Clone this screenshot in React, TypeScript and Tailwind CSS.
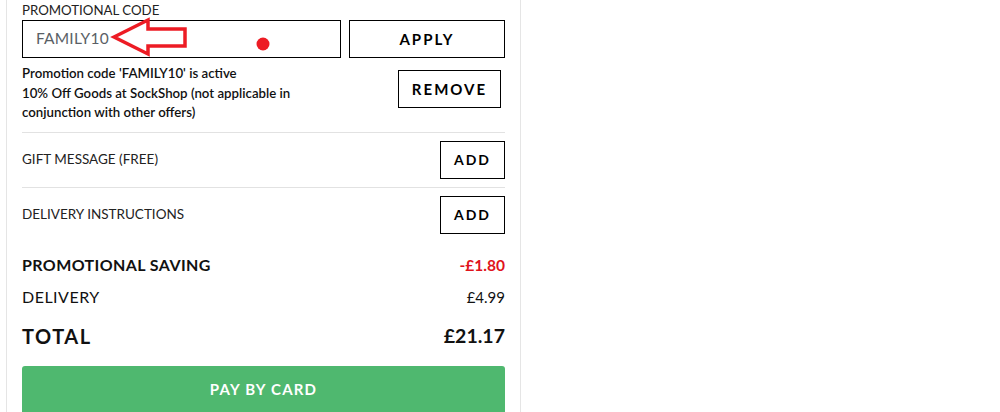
import React from "react";

const font = { fontFamily: "Lato, 'Open Sans', sans-serif" };

function OutlineButton({ label, className = "" }: { label: string; className?: string }) {
    return (
        <button
            className={`flex h-[38px] items-center justify-center border border-black bg-white text-[15px] font-bold tracking-[2px] text-black ${className}`}
        >
            {label}
        </button>
    );
}

export default function App() {
    return (
        <main className="relative h-[412px] w-[1000px] overflow-hidden bg-white text-[#111]" style={font}>
            <section className="ml-[6px] h-full w-[515px] border-x border-[#e5e5e5] px-[15px]">
                {/* promo code */}
                <div className="text-[13.25px] leading-[20px] text-[#222]">PROMOTIONAL CODE</div>
                <div className="flex h-[38px] gap-[8px]">
                    <div className="flex w-[319px] items-center border border-black pl-[13px] text-[15.5px] tracking-[0.2px] text-[#5a5f66]">
                        FAMILY10
                    </div>
                    <OutlineButton label="APPLY" className="flex-1" />
                </div>

                <div className="flex items-start justify-between pt-[6px]">
                    <p className="text-[13.25px] font-semibold leading-[19.5px] text-[#111]">
                        Promotion code 'FAMILY10' is active
                        <br />
                        10% Off Goods at SockShop (not applicable in
                        <br />
                        conjunction with other offers)
                    </p>
                    <OutlineButton label="REMOVE" className="mr-[4px] mt-[6px] w-[103px]" />
                </div>

                <div className="mt-[9px] border-t border-[#e2e2e2]" />
                <div className="flex items-center justify-between py-[8px]">
                    <span className="text-[13.5px] text-[#222]">GIFT MESSAGE (FREE)</span>
                    <OutlineButton label="ADD" className="w-[65px] !text-[14px]" />
                </div>
                <div className="border-t border-[#e2e2e2]" />
                <div className="flex items-center justify-between py-[8px]">
                    <span className="text-[13.5px] text-[#222]">DELIVERY INSTRUCTIONS</span>
                    <OutlineButton label="ADD" className="w-[65px] !text-[14px]" />
                </div>

                {/* totals */}
                <div className="mt-[7px] flex h-[32px] items-center justify-between font-bold leading-[32px]">
                    <span className="text-[16px] tracking-[0.4px]">PROMOTIONAL SAVING</span>
                    <span className="text-[15.5px] text-[#e0131b]">-£1.80</span>
                </div>
                <div className="flex h-[32px] items-center justify-between leading-[32px]">
                    <span className="text-[16px] tracking-[0.5px]">DELIVERY</span>
                    <span className="text-[15px]">£4.99</span>
                </div>
                <div className="mt-[3px] flex h-[40px] items-center justify-between font-bold leading-[40px]">
                    <span className="text-[20px] tracking-[1.5px]">TOTAL</span>
                    <span className="text-[19.5px]">£21.17</span>
                </div>

                <button className="mt-[10px] flex h-[48px] w-full items-center justify-center rounded-[3px] bg-[#4fb86f] text-[15px] font-bold tracking-[1.2px] text-white">
                    PAY BY CARD
                </button>
            </section>

            {/* red annotation drawn over the screenshot */}
            <svg className="pointer-events-none absolute left-0 top-0" width="300" height="70" viewBox="0 0 300 70">
                <polygon
                    points="114,37 148,20 148,29 185,29 185,46 148,46 148,54"
                    fill="none"
                    stroke="#ed1c24"
                    strokeWidth="3.5"
                    strokeLinejoin="miter"
                />
                <circle cx="263" cy="44" r="6.5" fill="#ed1c24" />
            </svg>
        </main>
    );
}
